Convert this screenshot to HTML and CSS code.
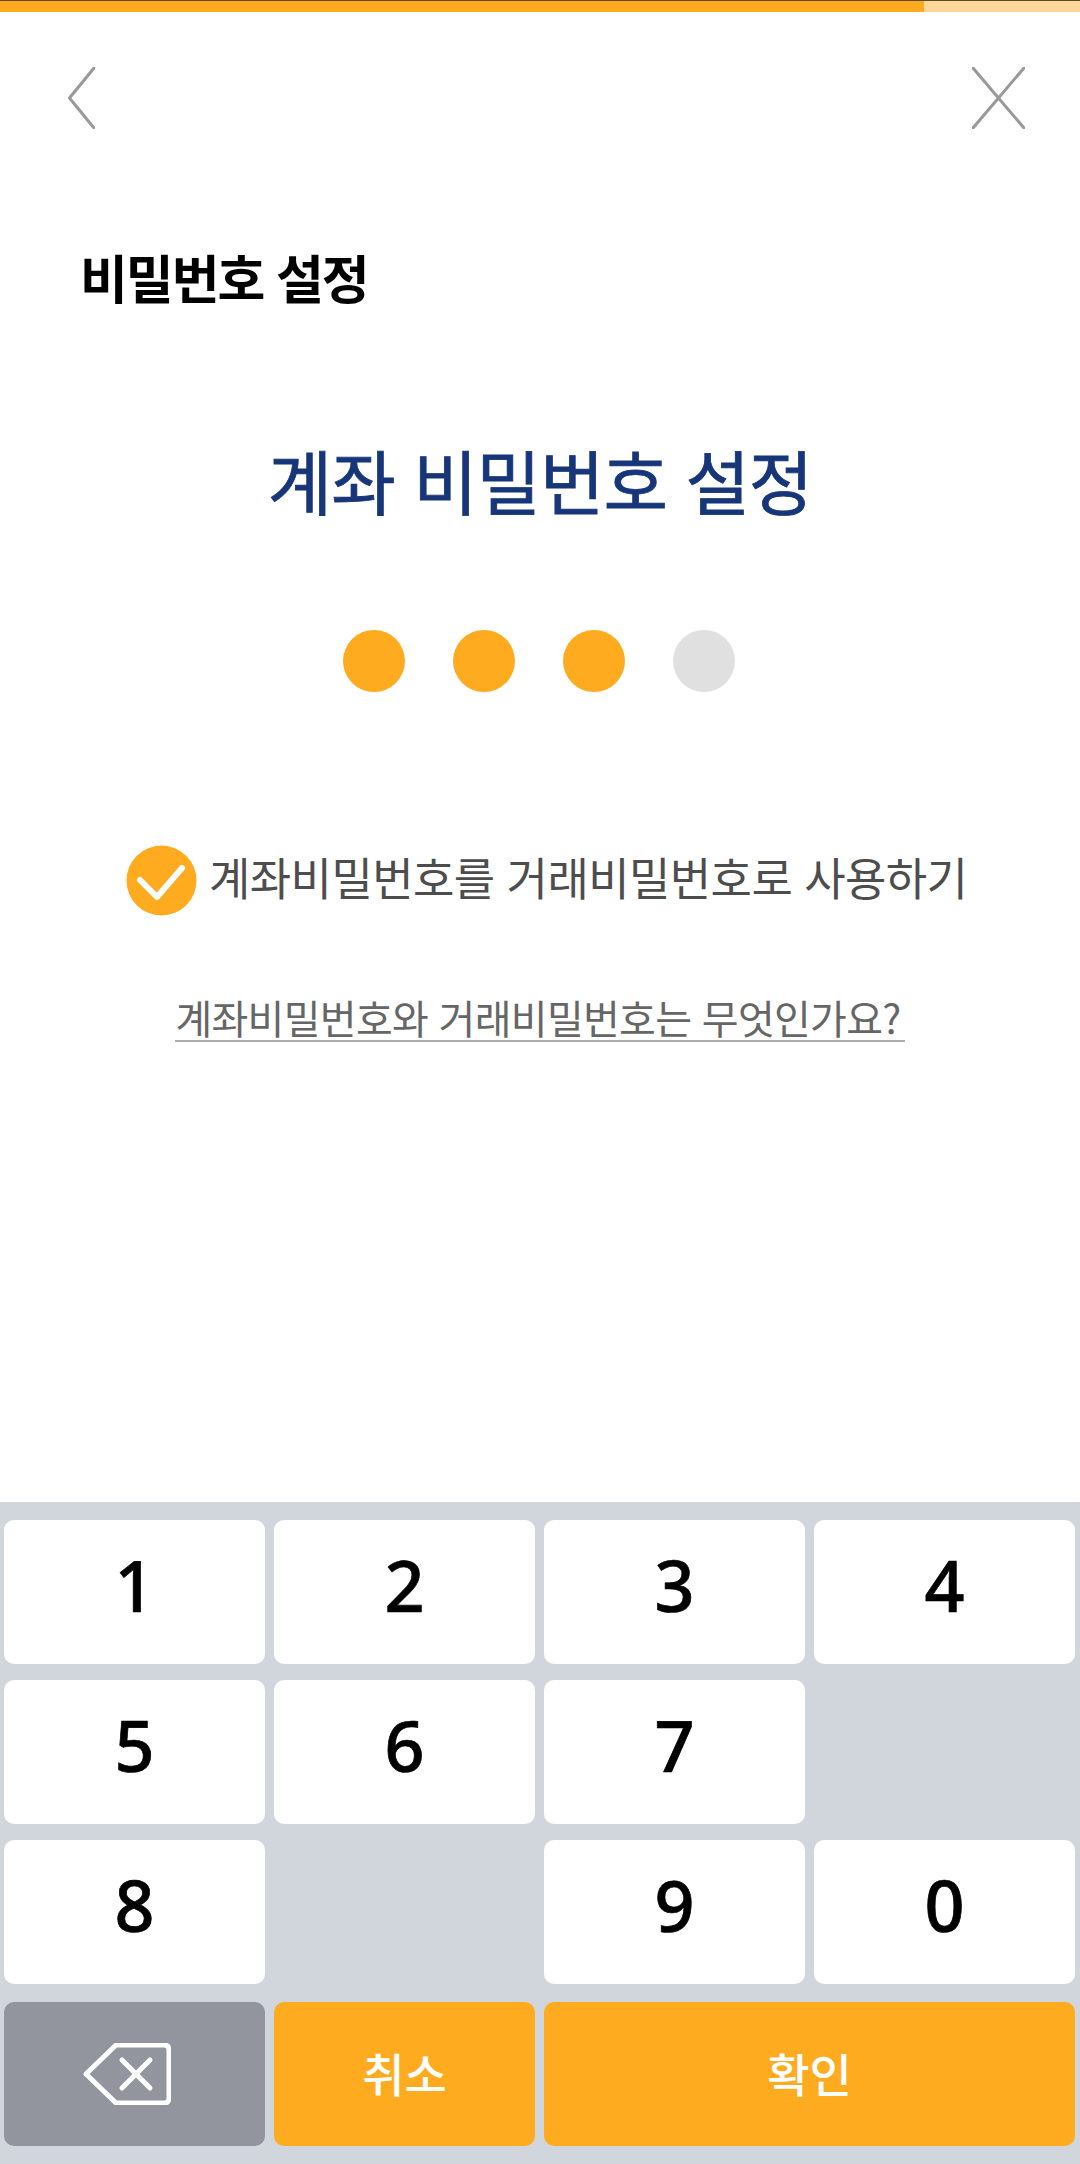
FILE: index.html
```html
<!DOCTYPE html>
<html lang="ko">
<head>
  <meta charset="UTF-8" />
  <meta name="viewport" content="width=device-width, initial-scale=1.0" />
  <title>비밀번호 설정</title>
  <link rel="stylesheet" href="styles.css">
</head>
<body>
  <div class="screen">
    <div class="progress"><div class="progress-fill"></div></div>

    <div class="nav">
      <svg class="nav-back" width="27" height="62" viewBox="0 0 27 62">
        <path d="M26 1 L1.5 31 L26 61" />
      </svg>
      <svg class="nav-close" width="53" height="62" viewBox="0 0 53 62">
        <path d="M1 1 L52 61 M52 1 L1 61" />
      </svg>
    </div>

    <h1 class="page-title">비밀번호 설정</h1>
    <h2 class="pin-title">계좌 비밀번호 설정</h2>

    <div class="pin-dots">
      <span class="dot on"></span>
      <span class="dot on"></span>
      <span class="dot on"></span>
      <span class="dot"></span>
    </div>

    <div class="check-row">
      <svg class="check-icon" width="71" height="71" viewBox="0 0 71 71">
        <circle cx="35.5" cy="35.5" r="35" fill="#ffab1f" />
        <path d="M14 35 L31 52 L56 23" fill="none" stroke="#fff" stroke-width="6" stroke-linecap="round" stroke-linejoin="round" />
      </svg>
      <span class="check-label">계좌비밀번호를 거래비밀번호로 사용하기</span>
    </div>

    <a class="help-link" href="#">계좌비밀번호와 거래비밀번호는 무엇인가요?</a>

    <!-- Number pad -->
    <div class="keypad">
      <button class="key">1</button>
      <button class="key">2</button>
      <button class="key">3</button>
      <button class="key">4</button>
      <button class="key">5</button>
      <button class="key">6</button>
      <button class="key">7</button>
      <div></div>
      <button class="key">8</button>
      <div></div>
      <button class="key">9</button>
      <button class="key">0</button>
      <button class="key key-back" aria-label="지우기">
        <svg width="88" height="62" viewBox="0 0 88 62">
          <path class="back-shape" d="M33 2 H81 Q86 2 86 7 V55 Q86 60 81 60 H33 L3 31 Z" />
          <path class="back-shape" d="M39 17 L67 45 M67 17 L39 45" />
        </svg>
      </button>
      <button class="key key-action">취소</button>
      <button class="key key-action key-wide">확인</button>
    </div>
  </div>
</body>
</html>
```

FILE: styles.css
```css
* {
  box-sizing: border-box;
}

body {
  margin: 0;
  background-color: white;
  font-family: 'Noto Sans CJK KR', 'Noto Sans', sans-serif;
}

.screen {
  display: flex;
  flex-direction: column;
  width: 1080px;
  height: 2164px;
}

.progress {
  height: 12px;
  background-color: #ffd899;
  border-top: 1px solid #5c4a2a;
}

.progress-fill {
  width: 924px;
  height: 100%;
  background-color: #ffab1f;
}

.nav {
  display: flex;
  justify-content: space-between;
  padding: 55px 55px 0 68px;
}

.nav path {
  fill: none;
  stroke: #999;
  stroke-width: 3;
  stroke-linecap: round;
  stroke-linejoin: round;
}

.page-title {
  margin: 112px 0 0 80px;
  font-size: 52px;
  line-height: 72px;
  font-weight: 700;
  color: #000;
  letter-spacing: -2px;
}

.pin-title {
  margin: 118px 0 0;
  text-align: center;
  font-size: 70px;
  line-height: 98px;
  font-weight: 400;
  color: #17367a;
  letter-spacing: -1px;
  -webkit-text-stroke: 0.8px #17367a;
}

.pin-dots {
  display: flex;
  justify-content: center;
  gap: 48px;
  margin: 101px 2px 0 0;
}

.dot {
  width: 62px;
  height: 62px;
  border-radius: 50%;
  background-color: #e0e0e0;
}

.dot.on {
  background-color: #ffab1f;
}

.check-row {
  display: flex;
  align-items: center;
  gap: 12px;
  margin: 153px 0 0 126px;
}

.check-label {
  padding-bottom: 8px;
  font-size: 45px;
  line-height: 62px;
  color: #4d4d4d;
  letter-spacing: -0.6px;
  white-space: nowrap;
}

.help-link {
  align-self: center;
  margin-top: 78px;
  padding-right: 4px;
  font-size: 40px;
  line-height: 46px;
  color: #666;
  letter-spacing: -0.7px;
  text-decoration: none;
  border-bottom: 2px solid #aaa;
  white-space: nowrap;
}

.keypad {
  display: grid;
  grid-template-columns: repeat(4, 261px);
  grid-template-rows: 144px 144px 144px 146px;
  column-gap: 9px;
  row-gap: 16px;
  margin-top: auto;
  padding: 18px 5px 18px 4px;
  background-color: #d1d5dc;
}

.key {
  padding: 0 0 15px;
  border: none;
  border-radius: 10px;
  background-color: white;
  color: #000;
  font-family: 'Noto Sans', sans-serif;
  font-size: 70px;
  font-weight: 500;
  -webkit-text-stroke: 0.7px #000;
}

.key-back {
  display: flex;
  align-items: center;
  justify-content: center;
  margin-top: 2px;
  padding: 0 16px 0 0;
  background-color: #92959e;
}

.back-shape {
  fill: none;
  stroke: white;
  stroke-width: 5;
  stroke-linecap: round;
  stroke-linejoin: round;
}

.key-action {
  margin-top: 2px;
  padding: 0 0 4px;
  background-color: #ffab1f;
  color: white;
  font-family: 'Noto Sans CJK KR', sans-serif;
  font-size: 46px;
  font-weight: 500;
  -webkit-text-stroke: 0;
}

.key-wide {
  grid-column: span 2;
}
```
